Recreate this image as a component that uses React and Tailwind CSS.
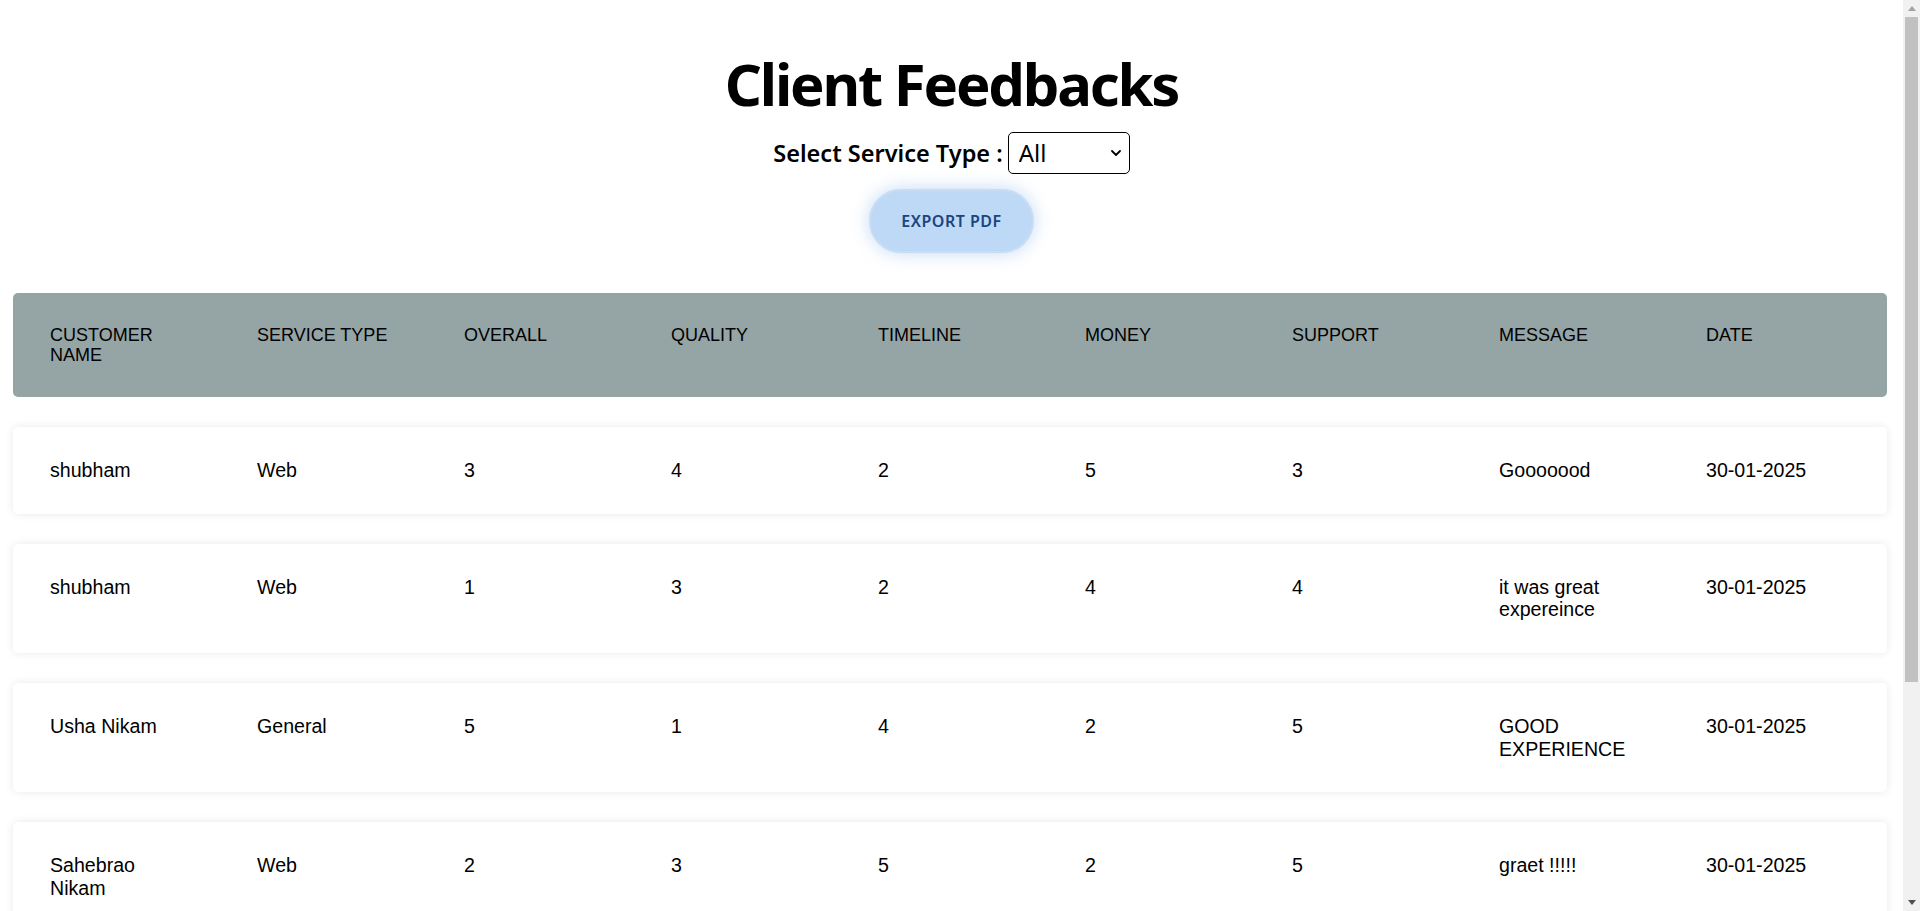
import { useState } from 'react';

const COLUMNS = [
  'CUSTOMER NAME',
  'SERVICE TYPE',
  'OVERALL',
  'QUALITY',
  'TIMELINE',
  'MONEY',
  'SUPPORT',
  'MESSAGE',
  'DATE',
];

const FEEDBACKS = [
  { name: 'shubham', service: 'Web', overall: 3, quality: 4, timeline: 2, money: 5, support: 3, message: 'Gooooood', date: '30-01-2025' },
  { name: 'shubham', service: 'Web', overall: 1, quality: 3, timeline: 2, money: 4, support: 4, message: 'it was great expereince', date: '30-01-2025' },
  { name: 'Usha Nikam', service: 'General', overall: 5, quality: 1, timeline: 4, money: 2, support: 5, message: 'GOOD EXPERIENCE', date: '30-01-2025' },
  { name: 'Sahebrao Nikam', service: 'Web', overall: 2, quality: 3, timeline: 5, money: 2, support: 5, message: 'graet !!!!!', date: '30-01-2025' },
  { name: 'Rohan', service: 'App', overall: 4, quality: 4, timeline: 3, money: 4, support: 4, message: 'Nice work', date: '31-01-2025' },
  { name: 'Priya', service: 'Web', overall: 5, quality: 5, timeline: 4, money: 5, support: 5, message: 'Excellent', date: '31-01-2025' },
];

const SERVICE_TYPES = ['All', 'Web', 'App', 'General'];

function ChevronDown() {
  return (
    <svg
      aria-hidden="true"
      viewBox="0 0 10 6"
      className="pointer-events-none absolute right-[9px] top-1/2 h-[6px] w-[10px] -translate-y-1/2"
      fill="none"
      stroke="black"
      strokeWidth="1.8"
      strokeLinecap="round"
      strokeLinejoin="round"
    >
      <path d="M1 1l4 4 4-4" />
    </svg>
  );
}

// imitation of the browser's classic scrollbar seen in the screenshot
function FakeScrollbar() {
  return (
    <aside className="sticky top-0 flex h-screen w-[17px] shrink-0 flex-col self-start bg-[#f1f1f1]">
      <div className="flex h-[17px] items-center justify-center">
        <svg viewBox="0 0 8 5" className="h-[5px] w-[8px]" fill="#a3a3a3">
          <path d="M4 0l4 5H0z" />
        </svg>
      </div>
      <div className="mx-[2px] h-[665px] bg-[#c1c1c1]" />
      <div className="flex-1" />
      <div className="flex h-[17px] items-center justify-center">
        <svg viewBox="0 0 8 5" className="h-[5px] w-[8px]" fill="#505050">
          <path d="M0 0h8L4 5z" />
        </svg>
      </div>
    </aside>
  );
}

export default function App() {
  const [serviceType, setServiceType] = useState('All');

  const rows = FEEDBACKS.filter((f) => serviceType === 'All' || f.service === serviceType);

  return (
    <div className="flex min-h-screen bg-white">
      <main className="min-w-0 flex-1 pb-[31px] font-['Liberation_Sans',Arial,sans-serif] text-black">
        <div className="flex flex-col items-center pt-[55px] font-['Noto_Sans','Open_Sans',sans-serif]">
          <h1 className="text-[58px] font-bold leading-none tracking-[-2.2px]">Client Feedbacks</h1>

          <div className="mt-[19px] flex items-center gap-[5px]">
            <label htmlFor="service" className="text-[23.5px] font-semibold leading-[1.2]">
              Select Service Type :
            </label>
            <div className="relative">
              <select
                id="service"
                value={serviceType}
                onChange={(e) => setServiceType(e.target.value)}
                className="h-[42px] w-[122px] appearance-none rounded-[5px] border border-black bg-white pl-[10px] text-[24px] leading-none outline-none"
              >
                {SERVICE_TYPES.map((t) => (
                  <option key={t} value={t}>
                    {t}
                  </option>
                ))}
              </select>
              <ChevronDown />
            </div>
          </div>

          <button
            type="button"
            className="mt-[15px] h-[64px] w-[165px] rounded-full border-2 border-[#c8dcf3] bg-[#bed9f5] text-[16px] font-semibold uppercase leading-none tracking-[0.5px] text-[#1a4580] shadow-[0_0_18px_rgba(120,170,235,0.45)]"
          >
            Export PDF
          </button>
        </div>

        <div className="mt-[40px] pl-[13px] pr-[16px]">
          <div className="grid grid-cols-[repeat(9,207px)] rounded-[5px] bg-[#95a5a6] py-[31.5px] text-[18px] leading-[1.15]">
            {COLUMNS.map((col) => (
              <div key={col} className="px-[37px]">
                {col}
              </div>
            ))}
          </div>

          {rows.map((f, i) => (
            <div
              key={i}
              className="mt-[30px] grid grid-cols-[repeat(9,207px)] rounded-[5px] bg-white py-[32px] text-[19.6px] leading-[1.15] shadow-[0_0_10px_rgba(0,0,0,0.09)]"
            >
              <div className="px-[37px]">{f.name}</div>
              <div className="px-[37px]">{f.service}</div>
              <div className="px-[37px]">{f.overall}</div>
              <div className="px-[37px]">{f.quality}</div>
              <div className="px-[37px]">{f.timeline}</div>
              <div className="px-[37px]">{f.money}</div>
              <div className="px-[37px]">{f.support}</div>
              <div className="px-[37px]">{f.message}</div>
              <div className="px-[37px]">{f.date}</div>
            </div>
          ))}
        </div>
      </main>
      <FakeScrollbar />
    </div>
  );
}
